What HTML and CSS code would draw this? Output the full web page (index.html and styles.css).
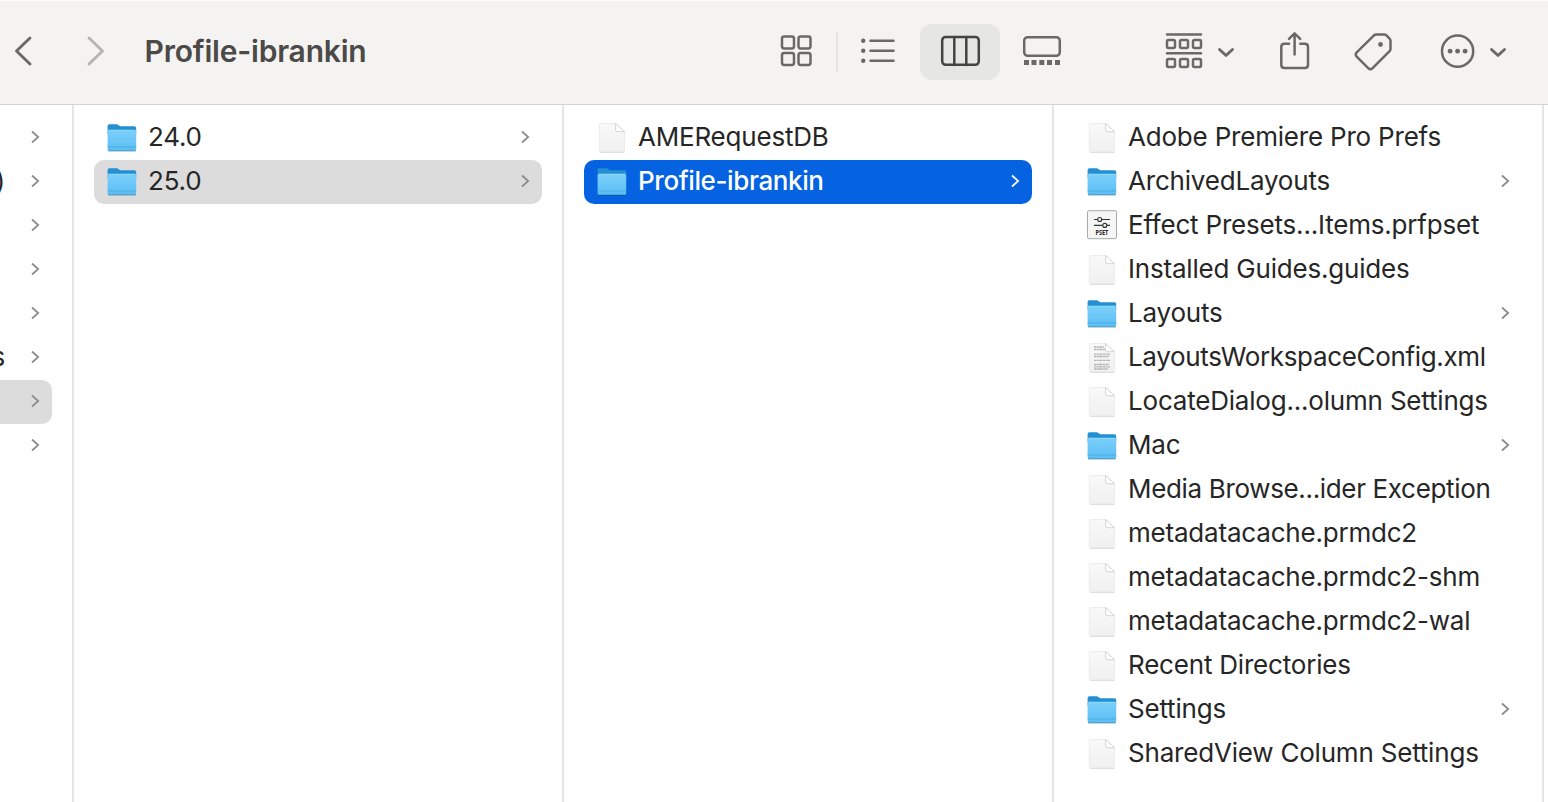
FILE: index.html
```
<!DOCTYPE html>
<html lang="en">
<head>
    <meta charset="UTF-8">
    <meta name="viewport" content="width=device-width, initial-scale=1.0">
    <title>Profile-ibrankin</title>
    <link rel="stylesheet" href="styles.css">
</head>
<body>
    <!-- Shared icons -->
    <svg class="defs" width="0" height="0">
        <defs>
            <linearGradient id="folder-front" x1="0" y1="0" x2="0" y2="1">
                <stop offset="0" stop-color="#7bd0fb"/>
                <stop offset="1" stop-color="#5bbdf3"/>
            </linearGradient>
            <linearGradient id="paper" x1="0" y1="0" x2="0" y2="1">
                <stop offset="0" stop-color="#f9f9f9"/>
                <stop offset="1" stop-color="#f0f0f0"/>
            </linearGradient>
        </defs>
        <symbol id="folder" viewBox="0 0 32 32">
            <path d="M2 28h28v1q0 1-1 1H3q-1 0-1-1z" fill="#000" opacity=".16"/>
            <path d="M1.6 4q0-1.8 1.8-1.8h7.2q1 0 1.8.8l1 .8q.7.5 1.6.5h13.4q1.800 0 1.800 1.800V12H1.600z" fill="#2490d2"/>
            <path d="M1.600 9.600q0-1.700 1.700-1.700h25.200q1.700 0 1.700 1.700v17.700q0 1.700-1.700 1.700H3.300q-1.700 0-1.700-1.700z" fill="url(#folder-front)"/>
            <path d="M2.300 8.200h27.200" stroke="#9bdefd" stroke-width=".8"/>
            <path d="M1.600 24.900h28.600" stroke="#45a7de" stroke-width=".8"/>
            <path d="M2.200 28.600h27.400" stroke="#439fd2" stroke-width=".8"/>
        </symbol>
        <symbol id="file" viewBox="0 0 32 32">
            <path d="M3.500 29.500h25v.4q0 1-1.200 1H4.700q-1.200 0-1.200-1z" fill="#000" opacity=".13"/>
            <path d="M4.600 1.500h15.200l8.700 8.200v18.600q0 1.600-1.600 1.600H4.900q-1.600 0-1.600-1.600V3q0-1.500 1.300-1.500z" fill="url(#paper)" stroke="#e2e2e2" stroke-width=".6"/>
            <path d="M19.600 1.500v6.700q0 1.500 1.500 1.500h7.400z" fill="#fff" stroke="#c9c9c9" stroke-width=".8"/>
        </symbol>
        <symbol id="text-file" viewBox="0 0 32 32">
            <use href="#file"/>
            <path d="M8 5h10M8 7.500h11M8 12.200h16M8 14.500h15M8 18.300h16M8 22.500h15M8 24.800h16M8 27h14" stroke="#b5b5b5" stroke-width="1.300" stroke-dasharray="2.600 .4 1.500 .3 3.500 .5"/>
        </symbol>
        <symbol id="arrow" viewBox="0 0 10 14">
            <path d="M2 1.500l6.200 5.500L2 12.500" fill="none" stroke="currentColor" stroke-width="1.700"/>
        </symbol>
        <symbol id="down" viewBox="0 0 20 56">
            <path d="M3.500 25.500l6.500 6 6.500-6" fill="none" stroke="currentColor" stroke-width="2.900" stroke-linecap="round" stroke-linejoin="round"/>
        </symbol>
    </svg>

    <header class="toolbar">
        <div class="nav">
            <svg class="back" width="22" height="56" viewBox="12 24 22 56"><path d="M30 38L16.500 51 30 64"/></svg>
            <svg class="forward" width="22" height="56" viewBox="86 24 22 56"><path d="M89 38l13.500 13L89 64"/></svg>
            <h1>Profile-ibrankin</h1>
        </div>
        <div class="views">
            <svg width="36" height="56" viewBox="778 24 36 56">
                <rect x="782" y="36.500" width="12" height="12" rx="2.200"/>
                <rect x="798.500" y="36.500" width="12" height="12" rx="2.200"/>
                <rect x="782" y="53" width="12" height="12" rx="2.200"/>
                <rect x="798.500" y="53" width="12" height="12" rx="2.200"/>
            </svg>
            <span class="divider"></span>
            <svg width="38" height="56" viewBox="859 24 38 56">
                <path d="M870.500 40.800h23M870.500 50.800h23M870.500 60.800h23"/>
                <g class="solid"><circle cx="863.200" cy="40.800" r="2.200"/><circle cx="863.200" cy="50.800" r="2.200"/><circle cx="863.200" cy="60.800" r="2.200"/></g>
            </svg>
            <div class="selected-view">
                <svg width="80" height="56" viewBox="920 24 80 56">
                    <rect x="942.200" y="36.900" width="36.600" height="27.900" rx="3.500"/>
                    <path d="M954.300 37v28M966.300 37v28"/>
                </svg>
            </div>
            <svg width="42" height="56" viewBox="1021 24 42 56">
                <rect x="1024.200" y="37.200" width="35.600" height="18.600" rx="3.500"/>
                <path class="solid" d="M1024 60h5v5h-5zM1031.500 60h5v5h-5zM1039.300 60h5v5h-5zM1047 60h5v5h-5zM1055 60h5v5h-5z"/>
            </svg>
        </div>
        <div class="actions">
            <svg width="40" height="56" viewBox="1164 24 40 56">
                <path d="M1167 34.500h34M1167 53.300h34"/>
                <rect x="1167" y="40" width="8" height="8" rx="1.500"/><rect x="1180" y="40" width="8" height="8" rx="1.500"/><rect x="1193" y="40" width="8" height="8" rx="1.500"/>
                <rect x="1167" y="59" width="8" height="8" rx="1.500"/><rect x="1180" y="59" width="8" height="8" rx="1.500"/><rect x="1193" y="59" width="8" height="8" rx="1.500"/>
            </svg>
            <svg class="down" width="20" height="56"><use href="#down"/></svg>
            <svg class="share" width="34" height="56" viewBox="1278 24 34 56">
                <path d="M1289 43.800h-4.500q-3.200 0-3.200 3.200v18q0 3 3.200 3h20.300q3.200 0 3.200-3V47q0-3.200-3.200-3.200h-4.500M1294.600 54.500V34M1289 38.800l5.600-5.400 5.600 5.400"/>
            </svg>
            <svg class="tag" width="42" height="56" viewBox="1353 24 42 56">
                <path d="M1374 35.300q1-.9 2.300-.9h8q1.200 0 2.100.9l3.200 3.400q.9.900.9 2.100v8q0 1.300-.9 2.300l-17 17q-2.200 2.200-4.400 0l-11.500-11.500q-2.100-2.100 0-4.200z"/>
                <circle class="solid" cx="1380.500" cy="44.500" r="2.400"/>
            </svg>
            <svg class="more" width="38" height="56" viewBox="1439 24 38 56">
                <circle cx="1457.600" cy="51.200" r="15.600"/>
                <g class="solid"><circle cx="1450.100" cy="51.200" r="2.400"/><circle cx="1457.600" cy="51.200" r="2.400"/><circle cx="1465.100" cy="51.200" r="2.400"/></g>
            </svg>
            <svg class="down" width="20" height="56"><use href="#down"/></svg>
        </div>
    </header>

    <main class="columns">
        <ul class="column cut">
            <li><span></span><svg class="arrow"><use href="#arrow"/></svg></li>
            <li><span>)</span><svg class="arrow"><use href="#arrow"/></svg></li>
            <li><span></span><svg class="arrow"><use href="#arrow"/></svg></li>
            <li><span></span><svg class="arrow"><use href="#arrow"/></svg></li>
            <li><span></span><svg class="arrow"><use href="#arrow"/></svg></li>
            <li><span>s</span><svg class="arrow"><use href="#arrow"/></svg></li>
            <li class="open"><span></span><svg class="arrow"><use href="#arrow"/></svg></li>
            <li><span></span><svg class="arrow"><use href="#arrow"/></svg></li>
        </ul>
        <ul class="column">
            <li><svg class="icon"><use href="#folder"/></svg><span>24.0</span><svg class="arrow"><use href="#arrow"/></svg></li>
            <li class="open"><svg class="icon"><use href="#folder"/></svg><span>25.0</span><svg class="arrow"><use href="#arrow"/></svg></li>
        </ul>
        <ul class="column">
            <li><svg class="icon"><use href="#file"/></svg><span>AMERequestDB</span></li>
            <li class="active"><svg class="icon"><use href="#folder"/></svg><span>Profile-ibrankin</span><svg class="arrow"><use href="#arrow"/></svg></li>
        </ul>
        <ul class="column">
            <li><svg class="icon"><use href="#file"/></svg><span>Adobe Premiere Pro Prefs</span></li>
            <li><svg class="icon"><use href="#folder"/></svg><span>ArchivedLayouts</span><svg class="arrow"><use href="#arrow"/></svg></li>
            <li>
                <svg class="icon" viewBox="0 0 32 32">
                    <rect x="1.500" y=".7" width="29" height="28" rx="1.500" fill="#f6f6f6" stroke="#a8a8a8"/>
                    <g fill="none" stroke="#333" stroke-width="1.100">
                        <path d="M8 9.500h3.600M15.800 9.500H24M8 15.400h8.500M21 15.400h3"/>
                        <circle cx="13.700" cy="9.500" r="2"/>
                        <circle cx="18.800" cy="15.400" r="2"/>
                    </g>
                    <text x="9.500" y="25.200" textLength="12.800" lengthAdjust="spacingAndGlyphs" class="pset-text">PSET</text>
                </svg>
                <span>Effect Presets...Items.prfpset</span>
            </li>
            <li><svg class="icon"><use href="#file"/></svg><span>Installed Guides.guides</span></li>
            <li><svg class="icon"><use href="#folder"/></svg><span>Layouts</span><svg class="arrow"><use href="#arrow"/></svg></li>
            <li><svg class="icon"><use href="#text-file"/></svg><span class="tight">LayoutsWorkspaceConfig.xml</span></li>
            <li><svg class="icon"><use href="#file"/></svg><span>LocateDialog...olumn Settings</span></li>
            <li><svg class="icon"><use href="#folder"/></svg><span>Mac</span><svg class="arrow"><use href="#arrow"/></svg></li>
            <li><svg class="icon"><use href="#file"/></svg><span class="tight">Media Browse...ider Exception</span></li>
            <li><svg class="icon"><use href="#file"/></svg><span>metadatacache.prmdc2</span></li>
            <li><svg class="icon"><use href="#file"/></svg><span>metadatacache.prmdc2-shm</span></li>
            <li><svg class="icon"><use href="#file"/></svg><span>metadatacache.prmdc2-wal</span></li>
            <li><svg class="icon"><use href="#file"/></svg><span>Recent Directories</span></li>
            <li><svg class="icon"><use href="#folder"/></svg><span>Settings</span><svg class="arrow"><use href="#arrow"/></svg></li>
            <li><svg class="icon"><use href="#file"/></svg><span>SharedView Column Settings</span></li>
        </ul>
    </main>
</body>
</html>
```
FILE: styles.css
```
* {
    box-sizing: border-box;
}
body {
    margin: 0;
    height: 802px;
    display: flex;
    flex-direction: column;
    overflow: hidden;
    background-color: #fff;
    color: #262626;
    font-family: Inter, "Liberation Sans", sans-serif;
    font-size: 26px;
}
.defs {
    position: absolute;
}
.toolbar {
    display: flex;
    flex: 0 0 105px;
    padding-top: 23px;
    background-color: #f4f3f1;
    border-top: 1px solid #fbfbfa;
    border-bottom: 1px solid #d5d4d3;
    color: #6a6966;
}
.toolbar svg {
    flex: none;
    fill: none;
    stroke: currentColor;
    stroke-width: 2.5;
    stroke-linecap: round;
    stroke-linejoin: round;
}
.toolbar .solid {
    fill: currentColor;
    stroke: none;
}
.nav,
.views,
.actions {
    display: flex;
    height: 56px;
}
.nav {
    width: 778px;
    padding-left: 12px;
}
.nav .back,
.nav .forward {
    stroke-width: 2.9;
}
.nav .forward {
    margin-left: 52px;
    color: #b5b4b2;
}
h1 {
    margin: 0 0 0 36.500px;
    font-size: 30px;
    font-weight: 600;
    line-height: 55px;
    letter-spacing: -0.2px;
    color: #4b4a48;
}
.views {
    width: 386px;
}
.divider {
    width: 2px;
    height: 40px;
    margin: 8px 21px 0 22px;
    background-color: #e5e4e2;
}
.selected-view {
    height: 56px;
    margin: 0 21px 0 23px;
    border-radius: 12px;
    background-color: #e6e6e4;
    color: #454442;
}
.toolbar .down {
    margin-left: 12px;
}
.actions .share {
    margin-left: 42px;
}
.actions .tag {
    margin-left: 41px;
}
.actions .more {
    margin-left: 44px;
}
.toolbar .more + .down {
    margin-left: 11px;
}
.columns {
    display: flex;
    flex: 1;
}
.column {
    flex: 0 0 490px;
    margin: 0;
    padding: 11px 20px 0;
    border-right: 2px solid #e5e5e5;
    list-style: none;
}
.column li {
    display: flex;
    align-items: center;
    height: 44px;
    padding: 0 12px;
    border-radius: 10px;
}
.column span {
    flex: 1;
    margin-left: 10px;
    line-height: 42px;
    padding-bottom: 2px;
    letter-spacing: -0.2px;
    white-space: nowrap;
}
.column .tight {
    letter-spacing: -0.34px;
}
.column .icon {
    width: 32px;
    height: 32px;
}
.column .arrow {
    width: 10px;
    height: 14px;
    margin-bottom: 2px;
    color: #8b8b8b;
}
.column .open {
    background-color: #dcdcdc;
}
.column .active {
    background-color: #0563e2;
    color: #fff;
}
.column .active span {
    font-weight: 500;
    letter-spacing: -0.4px;
}
.column .active .arrow {
    color: #fff;
}
/* Leftmost column runs off the window, only its right end shows */
.cut {
    flex-basis: 74px;
    padding-left: 0;
}
.cut li {
    justify-content: space-between;
    padding-left: 0;
    border-radius: 0 10px 10px 0;
}
.cut span {
    flex: 0 0 5px;
    display: flex;
    justify-content: flex-end;
    height: 44px;
    margin-left: 0;
    overflow: hidden;
}
.pset-text {
    font: 700 7px "Open Sans", sans-serif;
    fill: #222;
}
```
